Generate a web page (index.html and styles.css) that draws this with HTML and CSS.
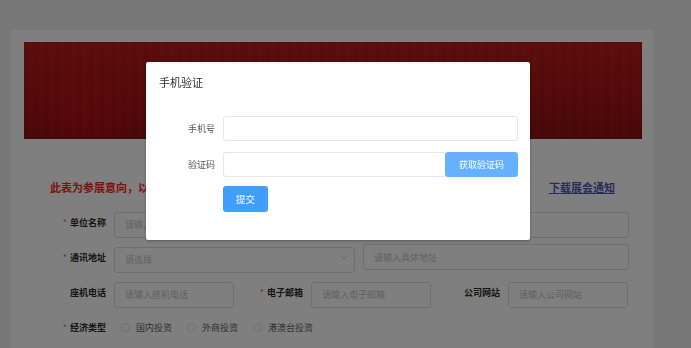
FILE: index.html
```html
<!DOCTYPE html>
<html lang="zh-CN">
<head>
<meta charset="utf-8">
<title>参展意向登记</title>
<link rel="stylesheet" href="styles.css">
</head>
<body>
<div class="page">
  <div class="banner">
    <div class="banner-title">中国国际展览会参展意向登记表</div>
  </div>
  <div class="form-area">
    <div class="notice-row">
      <span class="notice">此表为参展意向，以主办方确认为准</span>
      <a class="download" href="#">下载展会通知</a>
    </div>
    <div class="row">
      <label class="lbl req">单位名称</label>
      <div class="ctrl"><input class="inp" placeholder="请输入单位名称"></div>
    </div>
    <div class="row">
      <label class="lbl req">通讯地址</label>
      <div class="ctrl split">
        <div class="select">
          <input class="inp" placeholder="请选择" readonly>
          <svg class="chev" width="8" height="5" viewBox="0 0 8 5"><path d="M1 1 L4 4 L7 1" fill="none" stroke="#c0c4cc" stroke-width="1"/></svg>
        </div>
        <input class="inp grow" placeholder="请输入具体地址">
      </div>
    </div>
    <div class="row three">
      <label class="lbl">座机电话</label>
      <div class="ctrl"><input class="inp" placeholder="请输入座机电话"></div>
      <label class="lbl req">电子邮箱</label>
      <div class="ctrl"><input class="inp" placeholder="请输入电子邮箱"></div>
      <label class="lbl">公司网站</label>
      <div class="ctrl"><input class="inp" placeholder="请输入公司网站"></div>
    </div>
    <div class="row">
      <label class="lbl req">经济类型</label>
      <div class="ctrl radios">
        <span class="radio"><span class="dot"></span>国内投资</span>
        <span class="radio"><span class="dot"></span>外商投资</span>
        <span class="radio"><span class="dot"></span>港澳台投资</span>
      </div>
    </div>
  </div>
</div>

<div class="mask">
  <div class="dialog">
    <div class="dialog-title">手机验证</div>
    <div class="dialog-body">
      <div class="drow">
        <label class="dlbl">手机号</label>
        <input class="dinp">
      </div>
      <div class="drow">
        <label class="dlbl">验证码</label>
        <div class="group">
          <input class="dinp">
          <button class="btn-code" type="button">获取验证码</button>
        </div>
      </div>
      <div class="drow">
        <span class="dlbl"></span>
        <button class="btn-submit" type="button">提交</button>
      </div>
    </div>
  </div>
</div>
</body>
</html>
```

FILE: styles.css
```css
* { box-sizing: border-box; }
html, body { margin: 0; padding: 0; }
body {
  background: #f0f0f0;
  font-family: "Noto Sans CJK SC", "Noto Sans", sans-serif;
  width: 691px;
  height: 348px;
  overflow: hidden;
  padding-top: 30px;
}
.page {
  margin-left: 10px;
  width: 644px;
  height: 330px;
  background: #ffffff;
  padding: 12px 12px 0 14px;
}
.banner {
  height: 97px;
  background:
    repeating-linear-gradient(90deg, rgba(0,0,0,0.05) 0 2px, rgba(0,0,0,0) 2px 5px, rgba(255,255,255,0.02) 5px 7px, rgba(0,0,0,0) 7px 11px),
    radial-gradient(ellipse 70px 45px at 60px 70px, rgba(220,10,25,0.4), rgba(220,10,25,0)),
    radial-gradient(ellipse 60px 40px at 150px 68px, rgba(210,10,25,0.25), rgba(210,10,25,0)),
    linear-gradient(180deg, #bc1a1a 0%, #ac1616 45%, #8c1212 100%);
  display: flex;
  justify-content: center;
  padding-top: 19px;
  padding-left: 32px;
}
.banner-title {
  color: #ffd0c8;
  font-size: 17px;
  font-weight: 700;
  line-height: 20px;
  letter-spacing: 0.5px;
}
.form-area {
  margin: 0 13px;
}
.notice-row {
  display: flex;
  justify-content: space-between;
  align-items: center;
  padding: 0 13px;
  margin-top: 40px;
  height: 16px;
  margin-bottom: 14px;
}
.notice {
  color: #ff2222;
  font-size: 11px;
  font-weight: 700;
  line-height: 16px;
}
.download {
  color: #4a58b4;
  font-size: 11px;
  font-weight: 700;
  line-height: 16px;
  text-decoration: underline;
  margin-right: 1px;
}
.row {
  display: flex;
  align-items: center;
  height: 26px;
  margin-bottom: 9px;
}
.lbl {
  flex: 0 0 77px;
  text-align: right;
  padding-right: 8px;
  font-size: 9px;
  font-weight: 700;
  color: #2a2a2a;
}
.lbl.req::before {
  content: "*";
  color: #f56c6c;
  margin-right: 3px;
  font-weight: 400;
}
.ctrl { flex: 1; height: 26px; }
.row.three .ctrl { flex: 0 0 120px; }
.inp {
  width: 100%;
  height: 26px;
  border: 1px solid #dcdfe6;
  border-radius: 3px;
  padding: 0 10px;
  font-family: inherit;
  font-size: 9px;
  color: #606266;
  background: #fff;
  outline: none;
}
.inp::placeholder { color: #c0c4cc; }
.split { display: flex; gap: 8px; }
.select { position: relative; width: 241px; }
.chev { position: absolute; right: 7px; top: 11px; }
.grow { flex: 1; width: auto; }
.radios { display: flex; align-items: center; padding-left: 7px; }
.radio {
  display: inline-flex;
  align-items: center;
  font-size: 9px;
  color: #606266;
  margin-right: 15px;
}
.dot {
  width: 9px;
  height: 9px;
  border: 1px solid #dcdfe6;
  border-radius: 50%;
  background: #fff;
  margin-right: 6px;
}

.mask {
  position: fixed;
  inset: 0;
  background: rgba(0,0,0,0.5);
}
.dialog {
  position: absolute;
  left: 146px;
  top: 62px;
  width: 384px;
  height: 178px;
  background: #fff;
  border-radius: 2px;
  box-shadow: 0 1px 3px rgba(0,0,0,0.3);
}
.dialog-title {
  padding: 12px 0 0 13px;
  font-size: 11px;
  line-height: 16px;
  color: #303133;
}
.dialog-body {
  padding: 26px 12px 0 0;
}
.drow {
  display: flex;
  align-items: center;
  margin-bottom: 11px;
}
.drow:nth-child(2) { margin-bottom: 9px; }
.dlbl {
  flex: 0 0 77px;
  text-align: right;
  padding-right: 8px;
  font-size: 9px;
  color: #555558;
}
.dinp {
  flex: 1;
  width: 100%;
  height: 25px;
  border: 1px solid #e4e7ed;
  border-radius: 3px;
  outline: none;
  background: #fff;
}
.group { flex: 1; display: flex; height: 25px; }
.group .dinp { border-radius: 3px 0 0 3px; border-right: none; }
.btn-code {
  flex: 0 0 73px;
  height: 25px;
  border: none;
  border-radius: 3px;
  background: #66b1ff;
  color: #fff;
  font-family: inherit;
  font-size: 9px;
  padding: 0;
}
.btn-submit {
  width: 45px;
  height: 26px;
  border: none;
  border-radius: 3px;
  background: #409eff;
  color: #fff;
  font-family: inherit;
  font-size: 9.5px;
  padding: 0;
}
```
